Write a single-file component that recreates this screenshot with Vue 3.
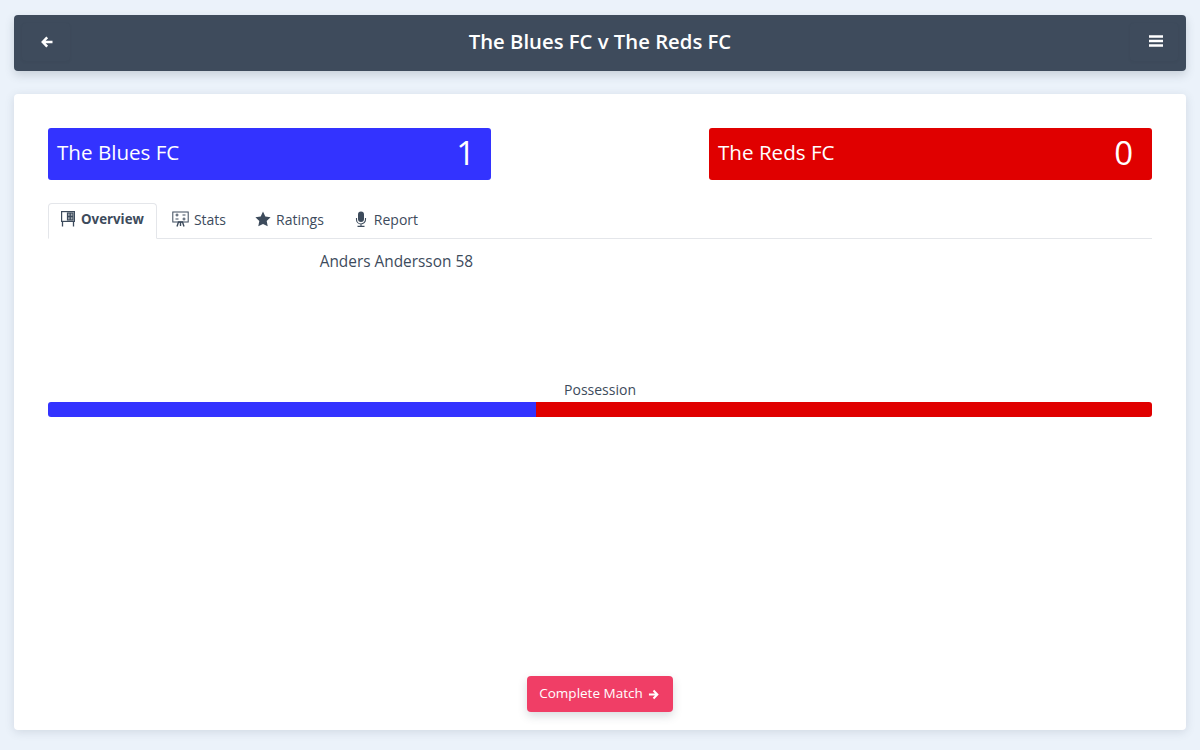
<script setup>
const tabs = [
  { id: 'overview', label: 'Overview', active: true },
  { id: 'stats', label: 'Stats' },
  { id: 'ratings', label: 'Ratings' },
  { id: 'report', label: 'Report' }
]
const bluePct = 44.2
</script>

<template>
  <div class="page">
    <header class="topbar">
      <button class="icon-btn" aria-label="Back">
        <svg width="12" height="12" viewBox="0 0 12 12"><path d="M6.200 1.400 1.800 6l4.400 4.600M2.400 6H11.500" fill="none" stroke="#fff" stroke-width="2.500"/></svg>
      </button>
      <h1 class="title">The Blues FC v The Reds FC</h1>
      <button class="icon-btn menu" aria-label="Menu">
        <svg width="14" height="12" viewBox="0 0 14 12"><path d="M0 1.500h14M0 6h14M0 10.500h14" stroke="#fff" stroke-width="2.500"/></svg>
      </button>
    </header>

    <main class="card">
      <section class="scores">
        <div class="team blue"><span>The Blues FC</span><span class="score">1</span></div>
        <div class="team red"><span>The Reds FC</span><span class="score">0</span></div>
      </section>

      <nav class="tabs">
        <a v-for="t in tabs" :key="t.id" class="tab" :class="{ active: t.active }">
          <svg v-if="t.id === 'overview'" class="ico ov" viewBox="0 0 14 16" fill="none" stroke="#3d4b5c" stroke-width="1.200">
            <rect x="0.600" y="0.600" width="12.800" height="9.800"/>
            <rect x="6.500" y="2" width="5.500" height="7" fill="#3d4b5c" fill-opacity=".45"/>
            <path d="M6.500 5.500h5.500M9.200 2v7M1.500 10.500v5M12.500 10.500v5" stroke-width="1.300"/>
          </svg>
          <svg v-else-if="t.id === 'stats'" class="ico st" viewBox="0 0 17 16" fill="none" stroke="#3d4b5c" stroke-width="1">
            <rect x="0.800" y="1" width="15.400" height="10"/>
            <path d="M3.500 4h3M5 2.500v3M10.500 4h3M3.500 8h3M10.500 8h3M12 6.500v3" />
            <path d="M5 15.500l1.500-4.500h4l1.500 4.500M8.500 11v4" stroke-width="1.400"/>
          </svg>
          <svg v-else-if="t.id === 'ratings'" class="ico" viewBox="0 0 16 16"><path fill="#3d4b5c" d="M8 .6l2.300 5 5.300.7-3.900 3.600 1 5.400L8 13l-4.700 2.300 1-5.400L.4 6.300l5.300-.7z"/></svg>
          <svg v-else class="ico" viewBox="0 0 16 16">
            <rect x="5" y="0.500" width="6" height="10.500" rx="3" fill="#3d4b5c"/>
            <path d="M3.500 7v1.500a4.500 4.500 0 0 0 9 0V7M8 13v2M4.500 15.400h7" fill="none" stroke="#3d4b5c" stroke-width="1.100"/>
          </svg>
          <span>{{ t.label }}</span>
        </a>
      </nav>

      <section class="events">
        <div class="scorers">Anders Andersson 58</div>
        <div class="scorers-right"></div>
      </section>

      <section class="possession">
        <div class="poss-label">Possession</div>
        <div class="poss-bar">
          <div class="poss-blue" :style="{ width: bluePct + '%' }"></div>
          <div class="poss-red"></div>
        </div>
      </section>

      <footer class="actions">
        <button class="complete"><span class="complete-text">Complete Match</span>
          <svg width="11" height="11" viewBox="0 0 12 12"><path d="M6 1.600 10.200 6 6 10.400M9.800 6H1" fill="none" stroke="#fff" stroke-width="2.200"/></svg>
        </button>
      </footer>
    </main>
  </div>
</template>

<style>
html, body { margin: 0; background: #ebf2fa; }
</style>

<style scoped>
.page {
  height: 750px;
  box-sizing: border-box;
  padding: 15px 14px 20px;
  display: flex;
  flex-direction: column;
  gap: 23px;
  background: #ebf2fa;
  color: #3d4b5c;
  font-family: "Open Sans", "Noto Sans", sans-serif;
}
.topbar {
  height: 56px;
  flex: none;
  box-sizing: border-box;
  display: flex;
  align-items: center;
  justify-content: space-between;
  padding: 0 8px;
  background: #3e4b5c;
  border-radius: 4px;
  box-shadow: 0 4px 10px rgba(62, 75, 92, 0.2);
}
.title {
  margin: 0 0 5px;
  color: #fff;
  font-size: 20.300px;
  font-weight: 600;
}
.icon-btn {
  width: 48px;
  height: 38px;
  padding: 0;
  display: flex;
  align-items: center;
  justify-content: center;
  background: #3e4b5c;
  border: 0;
  border-radius: 4px;
  box-shadow: 0 1px 3px rgba(40, 50, 65, 0.08);
  margin-top: -2px;
}
.icon-btn svg { margin-left: 1px; }
.icon-btn.menu svg { margin-left: 5px; margin-top: -3px; }
.card {
  flex: 1;
  box-sizing: border-box;
  padding: 34px 34px 18px;
  display: flex;
  flex-direction: column;
  background: #fff;
  border-radius: 4px;
  box-shadow: 0 2px 10px rgba(62, 75, 92, 0.15);
}
.scores { display: flex; justify-content: space-between; }
.team {
  width: 443px;
  height: 52px;
  box-sizing: border-box;
  padding: 0 18px 4px 9px;
  display: flex;
  align-items: center;
  justify-content: space-between;
  border-radius: 3px;
  color: #fff;
  font-size: 20.600px;
}
.blue { background: #3333ff; padding-right: 16px; }
.red { background: #e00000; padding-right: 19px; }
.score { font-size: 33px; line-height: 1; }
.tabs {
  display: flex;
  gap: 1px;
  height: 36px;
  box-sizing: border-box;
  margin-top: 23px;
  border-bottom: 1px solid #e4e6ea;
}
.tab {
  height: 36px;
  box-sizing: border-box;
  padding: 0 13px 4px;
  display: flex;
  align-items: center;
  gap: 5px;
  font-size: 14px;
  border: 1px solid transparent;
  border-radius: 4px 4px 0 0;
}
.tab.active {
  padding: 0 12px 4px;
  gap: 6px;
  font-size: 13.300px;
  font-weight: 700;
  background: #fff;
  border-color: #e4e6ea #e4e6ea #fff;
}
.ico { width: 16px; height: 16px; flex: none; }
.ico.ov { width: 14px; }
.ico.st { width: 17px; }
.events { display: grid; grid-template-columns: 1fr 1fr; height: 116px; margin-top: 12px; }
.scorers, .scorers-right { line-height: 22px; }
.scorers { font-size: 15.400px; text-align: right; padding-right: 127px; }
.possession { margin-top: 15px; }
.poss-label { font-size: 14px; line-height: 18px; text-align: center; margin-bottom: 3px; margin-top: -1px; }
.poss-bar { display: flex; height: 15px; border-radius: 3px; overflow: hidden; }
.poss-blue { background: #3333ff; }
.poss-red { flex: 1; background: #e00000; }
.actions { margin-top: auto; display: flex; justify-content: center; }
.complete {
  width: 146px;
  height: 36px;
  padding: 0;
  display: flex;
  align-items: center;
  justify-content: center;
  gap: 5px;
  border: 0;
  border-radius: 4px;
  background: #f03e66;
  color: #fff;
  font-family: inherit;
  font-size: 13.500px;
  box-shadow: 0 4px 10px rgba(62, 75, 92, 0.2);
}
.complete-text { margin-bottom: 2px; margin-left: -2px; }
</style>
